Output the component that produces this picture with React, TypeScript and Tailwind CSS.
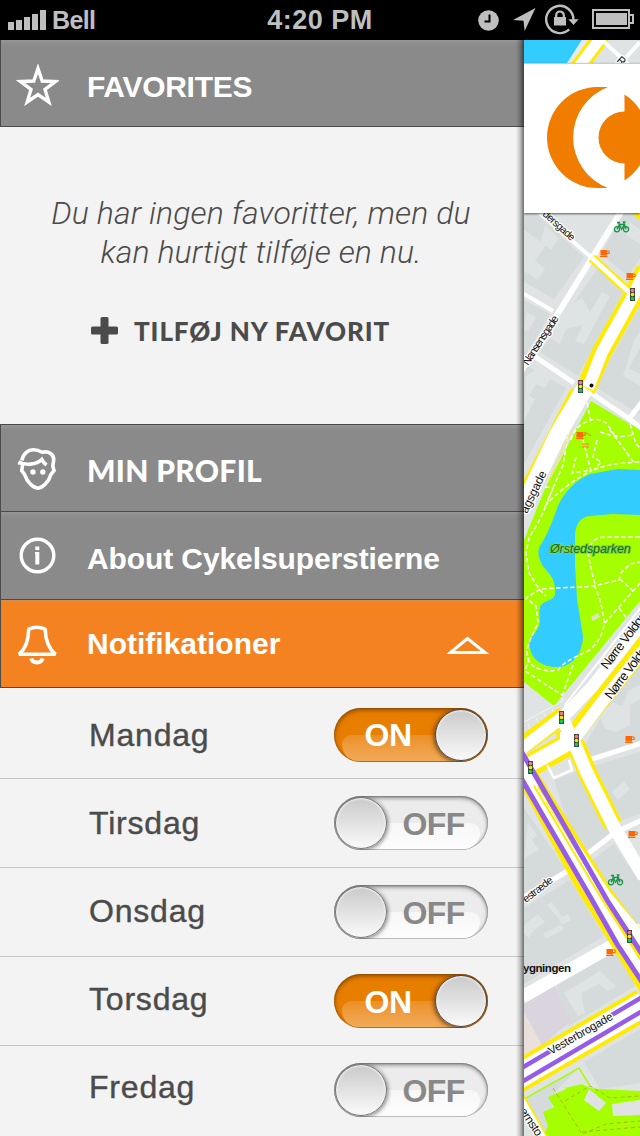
import React from "react";

const sans = "font-['Liberation_Sans',Arial,sans-serif]";

function StatusBar() {
  return (
    <header className={`flex h-10 w-full items-center bg-black text-[#bfbfbf] ${sans}`}>
      <div className="flex w-[213px] items-center pl-2">
        <svg width="38" height="20" viewBox="0 0 38 20" fill="#bfbfbf" className="-mt-px">
          <rect x="0" y="12" width="6" height="8" />
          <rect x="8" y="10" width="6" height="10" />
          <rect x="16" y="7" width="6" height="13" />
          <rect x="24" y="4" width="6" height="16" />
          <rect x="32" y="0" width="6" height="20" />
        </svg>
        <span className="ml-[6px] text-[25px] font-bold leading-none tracking-[-0.6px]">Bell</span>
      </div>
      <div className="w-[214px] text-center text-[27px] font-bold leading-none tracking-[0.5px]">4:20 PM</div>
      <div className="flex w-[213px] items-center justify-end pr-[6px]">
        <svg width="21" height="21" viewBox="0 0 21 21" className="mr-[14px]">
          <circle cx="10.5" cy="10.5" r="10.3" fill="#bfbfbf" />
          <path d="M11.5 4.5v7h-5" fill="none" stroke="#000" strokeWidth="2" />
        </svg>
        <svg width="23" height="23" viewBox="0 0 23 23" className="mr-[9px] -mt-px">
          <path d="M22.5 0L0 12l10.5.7L11.6 23z" fill="#bfbfbf" />
        </svg>
        <svg width="34" height="31" viewBox="0 0 34 31" className="mr-[13px] -mt-[2px]">
          <path d="M24.2 25.3A13.6 13.6 0 1 1 28.4 16" fill="none" stroke="#bfbfbf" strokeWidth="2.4" />
          <path d="M23.3 15.2h10.4L28.5 21z" fill="#bfbfbf" />
          <rect x="9" y="13" width="12" height="8.5" fill="#bfbfbf" />
          <path d="M11.2 13.5v-2.2a3.8 3.8 0 0 1 7.6 0v2.2" fill="none" stroke="#bfbfbf" strokeWidth="2.2" />
        </svg>
        <svg width="42" height="21" viewBox="0 0 42 21" className="-mt-px">
          <rect x="1" y="1" width="36" height="18" fill="none" stroke="#bfbfbf" strokeWidth="2" />
          <rect x="4" y="4" width="31" height="12" fill="#bfbfbf" />
          <path d="M38 6h3v8h-3" fill="none" stroke="#bfbfbf" strokeWidth="2" />
        </svg>
      </div>
    </header>
  );
}

function StarIcon() {
  return (
    <svg width="44" height="42" viewBox="0 0 44 42" className="mt-[4px]">
      <path d="M23 4.500l4.200 12.500 13.300.5-10.500 7.900 3.800 12.600-10.800-7.500-10.800 7.500 3.800-12.600L5.500 17.500l13.300-.5z" fill="none" stroke="#fff" strokeWidth="3.400" />
    </svg>
  );
}

function ProfileIcon() {
  return (
    <svg width="44" height="46" viewBox="0 0 44 46" fill="none" stroke="#fff" strokeWidth="3.600">
      <path d="M7 14.500C7.800 8 13 3.700 18.500 3.700c3.500 0 6 1 8.800 2.600C34 4.500 39 8.500 38.700 14c-.1 2.500-1 4-.8 6.500l1.100 4-3.200 4.200C33.800 36 27.500 42 23 42.200 18 42 12 36 9.600 28.500L6.700 24.500l1-6" />
      <path d="M3.500 15.800c6.500 4 18 3 23.300-2.300 1 2 2.200 3.700 4.700 5.500" />
      <path d="M3 17.500h5.500" strokeWidth="2.500" />
      <circle cx="18" cy="26" r="2.700" fill="#fff" stroke="none" />
      <circle cx="27.800" cy="26" r="2.700" fill="#fff" stroke="none" />
    </svg>
  );
}

function InfoIcon() {
  return (
    <svg width="44" height="40" viewBox="0 0 44 40">
      <circle cx="22.500" cy="19.500" r="16.300" fill="none" stroke="#fff" strokeWidth="3.400" />
      <rect x="20.300" y="10.500" width="4" height="3.600" fill="#fff" />
      <path d="M20 16h4.300v12.500h-4v-10.500h-.3z" fill="#fff" />
    </svg>
  );
}

function BellIcon() {
  return (
    <svg width="44" height="44" viewBox="0 0 44 44" fill="none" stroke="#fff" strokeWidth="3.600">
      <path d="M4 32.200h36.500c-7.500-6-10-13.500-10.300-25-5-2.300-11.700-2.300-16.500 0C13.500 18.500 11 26.500 4 32.200z" strokeLinejoin="bevel" />
      <path d="M16.200 36.500c1.500 5.300 10 5.300 11.500 0" strokeWidth="4" />
    </svg>
  );
}

interface HeaderProps {
  icon: React.ReactNode;
  title: string;
  className: string;
  textClass: string;
  trailing?: React.ReactNode;
}

function SectionHeader({ icon, title, className, textClass, trailing }: HeaderProps) {
  return (
    <div className={`flex items-center border-b border-l border-[#4b4b4b] text-white ${className}`}>
      <div className="ml-[14px] flex w-11 shrink-0 justify-center">{icon}</div>
      <div className={`ml-7 grow whitespace-nowrap leading-none ${textClass}`}>{title}</div>
      {trailing}
    </div>
  );
}

function Toggle({ on }: { on: boolean }) {
  const knob = "z-10 size-[52px] shrink-0 rounded-full border bg-linear-to-b from-[#cacaca] to-[#fafafa]";
  return (
    <div
      className={`relative flex h-[54px] w-[154px] items-center overflow-hidden rounded-full ${
        on
          ? "bg-[#e87e00] shadow-[inset_0_2px_5px_rgba(90,45,0,0.65),inset_0_0_2px_rgba(90,45,0,0.6)]"
          : "bg-[#ececec] shadow-[inset_0_2px_4px_rgba(0,0,0,0.45),inset_0_0_2px_rgba(0,0,0,0.6)]"
      }`}
    >
      <div
        className={`absolute inset-x-[8px] bottom-px h-[26px] rounded-t-[15px] rounded-b-[26px] ${
          on ? "bg-linear-to-b from-[#ec8f24] to-[#f2ab58]" : "bg-linear-to-b from-[#f7f7f7] to-[#fdfdfd]"
        }`}
      />
      {!on && (
        <div className={`${knob} ml-px border-[#777] shadow-[1px_1px_4px_rgba(0,0,0,0.5),inset_0_0_2px_1px_#f4f4f4]`} />
      )}
      <span
        className={`z-10 grow pt-px text-center text-[32px] font-bold leading-none ${
          on ? "pl-[7px] text-white tracking-[-0.5px]" : "pr-[8px] text-[#888] tracking-[-0.6px]"
        }`}
      >
        {on ? "ON" : "OFF"}
      </span>
      {on && (
        <div className={`${knob} mr-px border-[#4a4a4a] shadow-[-1px_1px_5px_rgba(70,35,0,0.8),inset_0_0_2px_1px_#f4f4f4]`} />
      )}
    </div>
  );
}

const days = [
  { name: "Mandag", on: true, nudge: "pb-0" },
  { name: "Tirsdag", on: false, nudge: "pb-0" },
  { name: "Onsdag", on: false, nudge: "pb-[2px]" },
  { name: "Torsdag", on: true, nudge: "pb-[4px]" },
  { name: "Fredag", on: false, nudge: "pb-[6px]" },
];

function Menu() {
  return (
    <aside className={`relative flex w-[524px] shrink-0 flex-col bg-[#f3f3f3] ${sans}`}>
      <SectionHeader
        icon={<StarIcon />}
        title="FAVORITES"
        className="h-[87px] bg-[#8a8a8a] shadow-[inset_0_5px_5px_-3px_#9a9a9a]"
        textClass="text-[30px] font-bold tracking-[-0.3px] pt-[8px]"
      />
      <section className="flex h-[297px] flex-col items-center pt-[67px] text-[#4b4b4b]">
        <p className="-ml-[2px] whitespace-nowrap text-center font-['Roboto',sans-serif] text-[32px] font-light italic leading-[39px] tracking-[0.1px]">
          Du har ingen favoritter, men du
          <br />
          kan hurtigt tilføje en nu.
        </p>
        <div className="mt-[44px] flex w-full items-center pl-[91px]">
          <svg width="27" height="27" viewBox="0 0 27 27" fill="#4b4b4b">
            <rect x="9.500" y="0" width="8" height="27" rx="1.500" />
            <rect x="0" y="9.500" width="27" height="8" rx="1.500" />
          </svg>
          <span className="ml-4 whitespace-nowrap pt-[2px] font-['Lato',sans-serif] text-[26px] font-black leading-none tracking-[0.9px]">
            TILFØJ NY FAVORIT
          </span>
        </div>
      </section>
      <SectionHeader
        icon={<ProfileIcon />}
        title="MIN PROFIL"
        className="h-[88px] border-t bg-[#8a8a8a] pt-[2px] shadow-[inset_0_5px_5px_-3px_#9a9a9a]"
        textClass="font-['Lato',sans-serif] text-[30px] font-black pt-[2px] tracking-[0.3px]"
      />
      <SectionHeader
        icon={<InfoIcon />}
        title="About Cykelsuperstierne"
        className="h-[88px] bg-[#8a8a8a] shadow-[inset_0_5px_5px_-3px_#9a9a9a]"
        textClass="text-[30px] font-bold pt-[6px] tracking-[-0.1px]"
      />
      <SectionHeader
        icon={<BellIcon />}
        title="Notifikationer"
        className="h-[88px] bg-[#f58220] shadow-[inset_0_2px_1px_#d78b4c]"
        textClass="text-[30px] font-bold"
        trailing={
          <svg width="44" height="20" viewBox="0 0 44 20" className="mr-[34px] mt-[5px]">
            <path d="M21.500 2.500L4.500 16.500h34.500z" fill="none" stroke="#fff" strokeWidth="3" />
          </svg>
        }
      />
      <ul className="flex flex-col">
        {days.map((day) => (
          <li
            key={day.name}
            className="flex h-[89px] items-center justify-between border-b border-[#c8c8c8] pr-9 pl-[89px] text-[#4b4b4b] first:h-[91px] first:pt-[3px] last:border-transparent"
          >
            <span
              className={`text-[32px] leading-none tracking-[0.8px] [-webkit-text-stroke:0.4px_#4b4b4b] ${day.nudge}`}
            >
              {day.name}
            </span>
            <Toggle on={day.on} />
          </li>
        ))}
      </ul>
      <div className="absolute inset-y-0 right-0 w-2 bg-linear-to-r from-transparent via-black/20 to-black/55" />
    </aside>
  );
}

type Place = { x: number; y: number };

const lights: Place[] = [
  { x: 632.5, y: 294.5 },
  { x: 580.5, y: 386.5 },
  { x: 561.5, y: 717.5 },
  { x: 576.5, y: 740.5 },
  { x: 530.5, y: 767.5 },
  { x: 629.5, y: 936.5 },
];
const cups: Place[] = [
  { x: 604, y: 253 },
  { x: 630, y: 276 },
  { x: 580, y: 435 },
  { x: 629, y: 739 },
  { x: 632, y: 834 },
  { x: 610, y: 952 },
];
const bikes: Place[] = [
  { x: 621.5, y: 227 },
  { x: 615.5, y: 880 },
];

const blocks = [
  "M524 214h12l48 43-30 42-30-17z",
  "M524 300l26 14-21 36-5 7z",
  "M602 262l22 28-46 86-38-24z",
  "M624 214h16v44l-12 18-27-22z",
  "M524 364l42 24-42 76z",
  "M640 306v108l-45-27z",
  "M640 650v92l-49 15-6-12z",
  "M554 780l24-9 34 60-34 27z",
  "M640 752v62l-18 6-30-54z",
  "M524 808l42 62-42 28z",
  "M587 864l27-20 26 38v60l-16-14z",
  "M524 908l46-28 34 56-80 48z",
  "M555 982l64-38 16 42-66 40z",
  "M584 1062l56-33v54l-40 6z",
  "M524 1100l54-32-28 30 10 38h-20l-16-28z",
];

const courts =
  "M524 230l22 15-11 16 10 7-7 12-14-9z M545 225l14 13-8 12-10-8z M526 312l10 5-8 15-4-2z M568 306l14-8 8 14 12-20 8 4-26 48-9-3 8-16-17 4-6 15-12-7 17-33z M630 222l10 8v14l-14-9z M526 376l12-8 14 8-7 12-9-4-7 12 6 3-11 22z M634 340l6-8v16l-11 20 11 6v12l-17-10z M600 716l12-14 10 4 6-15 12-6v14l-10 6v20l-14 7-11-3z M528 822l9 13-5 5 7 10-15 8z M612 792l12-11 6 8-12 11z M547 905l5-3 10 15 6-3 3 6-9 5-4-7z M524 925l14-11 7 8-12 9-4 7-5-4z M564 993l36-22 16 15-8 5-9-7-18 9 4 20-7 3z M543 934l18-9 3 4-18 10z";

const footpaths = [
  "M586 396l5 28M571 440c2-14 24-28 36-16l10 15M576 457l-4 16 19-3M597 440l-4 17 8 5-7 8M600 432c8 2 18 7 32 3M630 424l6 20 4 4",
  "M569 430l-6 35-16 37-2 5M545 487l8 1-8 20-6 13-10 17-3 15 3 20 10 16 7 7",
  "M545 506c14-16 32-28 46-35M583 440l8 31c16-7 28-8 49-9M610 430l25 34",
  "M542 589c22-2 42-1 56-4l21-5 2-7 9-9 10-2M588 553c2-13 9-16 18-16h34M588 552c2 12 4 22 7 32M594 585c6 12 8 22 10 36 0 12-5 20-14 29-16 8-24 10-32 20-13 2-24 0-30-10-4-12 4-24 10-37l-2-17-10-8 14-9",
  "M620 579l13 12M640 583l-21 24-14 16M619 608l9 12M529 658l-4 13 17 11 20 13M573 665l-11 31 4 12",
];

function TrafficLight({ x, y }: Place) {
  return (
    <g transform={`translate(${x} ${y})`}>
      <rect x="-2.500" y="-6.500" width="5" height="13" fill="#444" />
      <circle cy="-4" r="1.800" fill="#f47b8a" />
      <circle cy="0" r="1.800" fill="#ffe800" />
      <circle cy="4" r="1.800" fill="#00d84a" />
    </g>
  );
}

function Cup({ x, y }: Place) {
  return (
    <g transform={`translate(${x} ${y})`}>
      <rect x="-3.500" y="-3" width="6.500" height="5.500" fill="#ff6600" />
      <path d="M3-2h2.200v2.500H3M-4 3.500h7.500" fill="none" stroke="#ff6600" strokeWidth="1" />
    </g>
  );
}

function Bike({ x, y }: Place) {
  return (
    <g transform={`translate(${x} ${y})`} fill="none" stroke="#169447" strokeWidth="1.300">
      <circle cx="-4.500" cy="2.200" r="2.600" />
      <circle cx="4.500" cy="2.200" r="2.600" />
      <path d="M-4.500 2.200L-2-2.500h5L0 2.200l-3-6.500M4.500 2.200L2-5h2M-4.500-4.500h3" />
    </g>
  );
}

interface LabelProps {
  x: number;
  y: number;
  angle: number;
  size: number;
  spacing: number;
  children: string;
}

function StreetLabel({ x, y, angle, size, spacing, children }: LabelProps) {
  return (
    <text
      transform={`translate(${x} ${y}) rotate(${angle})`}
      fontSize={size}
      letterSpacing={spacing}
      fill="#111"
      stroke="#fff"
      strokeWidth="2.5"
      strokeLinejoin="round"
      paintOrder="stroke"
    >
      {children}
    </text>
  );
}

function CityMap() {
  return (
    <svg width="116" height="1096" viewBox="524 40 116 1096" className={`block ${sans}`} fill="none">
      <rect x="524" y="40" width="116" height="1096" fill="#dfe3e4" />
      <path d={blocks.join(" ")} fill="#d5dadb" />
      <path d={courts} fill="#dfe3e4" />
      <path d="M524 1004l31-18 16 35-32 27-15-24z" fill="#dad4df" />
      <path d="M524 1012l20 37-20 9z" fill="#ebe1da" />

      <path d="M524 40h62l-17 24h-45z" fill="#33ccff" />
      <path d="M586 38l-18 28" stroke="#e5eaf0" strokeWidth="5" />
      <path d="M602 36l-24 32" stroke="#ffeb00" strokeWidth="17" />
      <path d="M602 36l-24 32" stroke="#fff" strokeWidth="11" />
      <path d="M600 38l30 28M640 42l-18 20" stroke="#fff" strokeWidth="4" />

      <path d="M591 401l37 22 12 6v172L554 706l-30-24V540l20-49z" fill="#a6ff00" />
      <path
        d="M640 470l-22-1-28 5c-14 6-26 18-32 32-6 16-10 28-18 40-4 7 0 17 6 24 6 6 10 13 9 24-1 8-13 5-15 14-2 7 2 13-2 20-5 9-11 13-7 24 3 9 14 16 28 15 15-1 24-16 24-31l-6-37-2-34 0-31c1-11 6-17 15-18l22-2 28 1z"
        fill="#33ccff"
      />
      <path d={footpaths.join(" ")} stroke="#fff" strokeWidth="1.500" strokeDasharray="4.500 2.500" />
      <path d="M591 617l7-4 2 4-7 4z" fill="#dbe3c8" />
      <path d="M562 704l80-100" stroke="#dfe3e4" strokeWidth="5" />
      <path d="M565 705l77-99" stroke="#fff" strokeWidth="2" />
      <path d="M524 722l40-22M528 724l3 8M536 718l4 9M544 713l4 9M552 709l4 8" stroke="#fff" strokeWidth="0.600" />

      <g stroke="#fff">
        <path d="M622 210l-30 48-35 57-37 58" strokeWidth="6" />
        <path d="M532 206l60 52M524 294l29 17" strokeWidth="4" />
        <path d="M534 356l40 27M588 391l40 27 16 12M628 420l14-18" strokeWidth="5" />
        <path d="M524 897l47-28 10-10 35-27 26-12M580 763l62-20" strokeWidth="5" />
        <path d="M522 997l120-68" strokeWidth="13" />
      </g>

      <g stroke="#ffeb00">
        <path d="M592 258l38 35" strokeWidth="9" />
        <path d="M635 212l8 6" strokeWidth="7" />
        <path d="M646 270l-14 28-30 54-17 38" strokeWidth="20" />
        <path d="M575 390l-23 45-32 62" strokeWidth="9" />
        <path d="M522 746l42-31" strokeWidth="18" />
        <path d="M597 698l45-60" strokeWidth="6" strokeDasharray="3 1" />
        <path d="M570 739l31-39 44-55" strokeWidth="18" />
        <path d="M522 770l52-29" strokeWidth="23" />
        <path d="M563 728l14 20 11 26 25 51" strokeWidth="19" />
        <path d="M514 773l61 114 61 99 10 16v-66l-33-44-78-124-25-30z" fill="#ffeb00" stroke="none" />
        <path d="M516 1078l128-74" strokeWidth="32" />
      </g>
      <g stroke="#fff">
        <path d="M592 258l38 35" strokeWidth="5" />
        <path d="M646 270l-14 28-30 54-14 36" strokeWidth="12" />
        <path d="M585 388l-27 46-36 75" strokeWidth="17" />
        <path d="M520 750l44-34 28-29 52-66" strokeWidth="12" />
        <path d="M560 738l15 0 27-36 44-55" strokeWidth="12" />
        <path d="M522 769l52-29" strokeWidth="15" />
        <path d="M563 720l13 27 11 26 27 54 30 50" strokeWidth="13" />
        <path d="M547 765l7 13 18-8-3-10" strokeWidth="2.500" />
        <path d="M514 764l67 122 67 110v-58l-38-46-77-118-13-20z" fill="#fff" stroke="none" />
        <path d="M516 1078l128-74" strokeWidth="24" />
      </g>
      <path d="M572 430l-24 52" stroke="#ffeb00" strokeWidth="0.800" />
      <path d="M534 786l66 110 42 66M538 786l37 58 28 52 16 27 23 36" stroke="#ffeb00" strokeWidth="2" />
      <path d="M546 802l60 96 14 22" stroke="#ffeb00" strokeWidth="1" />
      <path d="M520 749l48 83 39 68 37 57M520 776l33 57 39 67 25 44 27 41" stroke="#955ce8" strokeWidth="5" />
      <path d="M520 1069l124-73M520 1083l124-73" stroke="#955ce8" strokeWidth="4.500" />

      <path d="M563 1084l2 4 17-4 8 4 10 1 40 2v45h-97l5-10-5-14 11-5-6-10 18-8z" fill="#a6ff00" />
      <path d="M524 1099l55-31 11 18" stroke="#a6ff00" strokeWidth="1.500" />
      <path d="M589 1089l17 14-7 8-15-11zM612 1104l28-4v15l-27 1z" fill="#dfe3e4" />
      <path d="M565 1101l25-15 20 12 30-2M553 1088l29 46 24-10 34-3M582 1132l58-5" stroke="#b4b01c" strokeDasharray="4 3" />
      <path d="M522 1096l24 42" stroke="#ffeb00" strokeWidth="5" />
      <path d="M520 1096l24 42" stroke="#fff" strokeWidth="5" />

      {cups.map((p) => (
        <Cup key={`${p.x}-${p.y}`} {...p} />
      ))}
      <path d="M585 432l6 4M582 444h7M582 447h7" stroke="#f47b20" />
      {bikes.map((p) => (
        <Bike key={`${p.x}-${p.y}`} {...p} />
      ))}
      {lights.map((p) => (
        <TrafficLight key={`${p.x}-${p.y}`} {...p} />
      ))}
      <circle cx="591.500" cy="385.500" r="2" fill="#111" />

      <StreetLabel x={616} y={61} angle={42} size={11} spacing={0}>R</StreetLabel>
      <StreetLabel x={542} y={215} angle={42} size={10.5} spacing={-0.6}>dersgade</StreetLabel>
      <StreetLabel x={528} y={366} angle={-57} size={11} spacing={-1.1}>Nansensgade</StreetLabel>
      <StreetLabel x={527} y={514} angle={-64} size={12} spacing={-0.1}>agsgade</StreetLabel>
      <StreetLabel x={607} y={670} angle={-53} size={13} spacing={-0.8}>Nørre Voldga</StreetLabel>
      <StreetLabel x={611} y={700} angle={-53} size={13} spacing={-0.8}>Nørre Voldg</StreetLabel>
      <StreetLabel x={526} y={903} angle={-38} size={10.5} spacing={-0.6}>estræde</StreetLabel>
      <StreetLabel x={551} y={1055} angle={-30} size={11.5} spacing={-0.2}>Vesterbrogade</StreetLabel>
      <StreetLabel x={519} y={1111} angle={56} size={12} spacing={-0.4}>ernsto</StreetLabel>
      <text x="550" y="553" fontSize="12.500" fontStyle="italic" letterSpacing="-0.100" fill="#146b1c" stroke="#7fd64a" strokeWidth="2" paintOrder="stroke">
        Ørstedsparken
      </text>
      <text x="523" y="972" fontSize="11.500" fontWeight="700" textLength="48" fill="#111">
        ygningen
      </text>
    </svg>
  );
}

function LogoCard() {
  return (
    <div className="absolute inset-x-0 top-[23px] flex h-[150px] items-center border-t border-[#c9cdcd] bg-white shadow-[0_1px_2px_rgba(0,0,0,0.6)]">
      <svg width="116" height="104" viewBox="524 86 116 104" fill="#f07d00" className="-mt-px">
        <path d="M608 87A54 54 0 0 0 608 188H597.500A50.500 50.500 0 0 1 597.500 87z" />
        <path d="M624.500 94.500A50.500 50.500 0 0 1 648 137.500A50.500 50.500 0 0 1 624.500 180.500V163.500A26 26 0 0 1 624.500 111.500z" />
      </svg>
    </div>
  );
}

export default function App() {
  return (
    <div className="flex h-[1136px] w-[640px] flex-col overflow-hidden bg-black">
      <StatusBar />
      <main className="flex h-[1096px] overflow-hidden">
        <Menu />
        <div className="relative w-[116px] overflow-hidden">
          <CityMap />
          <LogoCard />
        </div>
      </main>
    </div>
  );
}
